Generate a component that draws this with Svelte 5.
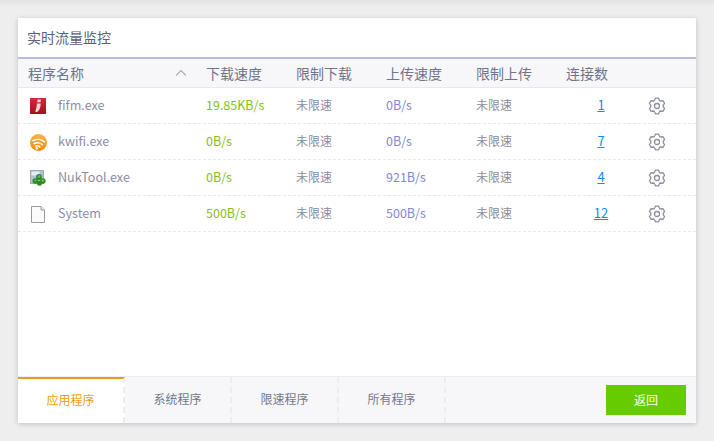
<script>
  const rows = [
    { name: 'fifm.exe', icon: 'fifm', down: '19.85KB/s', up: '0B/s', conn: 1 },
    { name: 'kwifi.exe', icon: 'wifi', down: '0B/s', up: '0B/s', conn: 7 },
    { name: 'NukTool.exe', icon: 'nuk', down: '0B/s', up: '921B/s', conn: 4 },
    { name: 'System', icon: 'file', down: '500B/s', up: '500B/s', conn: 12 }
  ];
  const tabs = ['应用程序', '系统程序', '限速程序', '所有程序'];
  const pt = (r, deg) => {
    const a = (deg * Math.PI) / 180;
    return `${(9 + r * Math.cos(a)).toFixed(2)} ${(9 + r * Math.sin(a)).toFixed(2)}`;
  };
  const gearPath =
    'M' +
    [0, 1, 2, 3, 4, 5]
      .flatMap((k) => {
        const c = -90 + 60 * k;
        return [pt(6.2, c - 24), pt(8, c - 11), pt(8, c + 11), pt(6.2, c + 24)];
      })
      .join('L') +
    'Z';
</script>

<div class="page">
  <section class="card">
    <h1 class="title">实时流量监控</h1>
    <div class="row head">
      <div class="name-h"><span>程序名称</span>
        <svg class="caret" width="12" height="8" viewBox="0 0 12 8"><path d="M1 6.500 6 1.500l5 5" fill="none" stroke="#a9acb8" stroke-width="1.100"/></svg>
      </div>
      <div>下载速度</div><div>限制下载</div><div>上传速度</div><div>限制上传</div><div>连接数</div><div></div>
    </div>
    <div class="list">
      {#each rows as r}
        <div class="row item">
          <div class="name">
            <span class="ico">
              {#if r.icon === 'fifm'}
                <svg width="16" height="16" viewBox="0 0 16 16"><defs><linearGradient id="rg" x1="0" y1="0" x2="0" y2="1"><stop offset="0" stop-color="#d52a3c"/><stop offset="1" stop-color="#a50f20"/></linearGradient></defs><rect width="16" height="16" fill="url(#rg)"/><path d="M7.500 1.500h3.400l-.4 2.800H7.300zM6.800 5.500h3.800c.3 3-.8 6.500-3.200 8.300-1.400.8-2.300 0-1.900-1.400.9-2.200 1.400-4.500 1.300-6.900z" fill="#f4d5d9"/></svg>
              {:else if r.icon === 'wifi'}
                <svg width="17" height="17" viewBox="0 0 16 16"><defs><linearGradient id="og" x1="0" y1="0" x2="0" y2="1"><stop offset="0" stop-color="#fbb444"/><stop offset="1" stop-color="#ef8a0a"/></linearGradient></defs><circle cx="8" cy="8" r="8" fill="url(#og)"/><g fill="none" stroke="#fff" stroke-width="1.400"><path d="M2.300 6.500C6.300 4.300 11 4.800 14 7.800"/><path d="M3.300 9.200C6.500 7.600 9.800 8 12.100 10.300"/><path d="M4.800 11.700c1.800-.9 3.600-.6 5 .9"/></g><circle cx="6.400" cy="13.400" r="1.100" fill="#fff"/></svg>
              {:else if r.icon === 'nuk'}
                <svg width="16" height="16" viewBox="0 0 16 16"><rect x=".5" y=".5" width="13" height="13" fill="#a9c2e2" stroke="#a8a8a8"/><rect x="1.500" y="1.500" width="8" height="4" fill="#e4ebf3"/><g fill="#2c8a20"><circle cx="9" cy="7" r="2.900"/><circle cx="5.300" cy="11" r="2.800"/><circle cx="12.800" cy="11" r="2.800"/><circle cx="9.500" cy="13.300" r="2.500"/></g><circle cx="9" cy="6.500" r="1.300" fill="#63c04a"/><circle cx="12.800" cy="10.500" r="1.300" fill="#63c04a"/><circle cx="5.300" cy="10.500" r="1" fill="#63c04a"/></svg>
              {:else}
                <svg width="16" height="17" viewBox="0 0 16 17"><path d="M1.500.5h9.500l3.500 3.500v12.500h-13z" fill="#fbfbfb" stroke="#9a9a9a"/><path d="M11 .5V4h3.500" fill="#eee" stroke="#9a9a9a"/></svg>
              {/if}
            </span>
            <span class="label">{r.name}</span>
          </div>
          <div class="down">{r.down}</div>
          <div class="lim">未限速</div>
          <div class="up">{r.up}</div>
          <div class="lim">未限速</div>
          <div class="conn"><a href="#top">{r.conn}</a></div>
          <div class="gear">
            <svg width="18" height="18" viewBox="0 0 18 18" fill="none" stroke="#8e909e" stroke-width="1.300"><path d={gearPath} stroke-linejoin="round"/><circle cx="9" cy="9" r="2.500"/></svg>
          </div>
        </div>
      {/each}
    </div>
    <footer class="foot">
      {#each tabs as t, i}
        <div class="tab" class:on={i === 0}>{t}</div>
      {/each}
      <button class="back">返回</button>
    </footer>
  </section>
</div>

<style>
  :global(body) { margin: 0; background: #eee; }
  .page {
    width: 714px; height: 441px; box-sizing: border-box; padding: 18px;
    background: linear-gradient(#e3e3e3, #eee 7px);
    font-family: "Noto Sans CJK SC", "Open Sans", sans-serif;
    overflow: hidden;
  }
  .card {
    width: 678px; height: 405px; background: #fff; display: flex; flex-direction: column;
    box-shadow: 0 1px 5px rgba(0,0,0,.2);
  }
  .title {
    margin: 0; height: 39px; line-height: 38px; padding-left: 9px;
    font-size: 14px; font-weight: 400; color: #5d6079;
    border-bottom: 2px solid #b9bcd8;
  }
  .row {
    display: grid; grid-template-columns: 188px 90px 90px 90px 90px 72px 58px;
  }
  .head {
    height: 28px; line-height: 28px; background: #f7f7fa; font-size: 14px; color: #71738a;
    border-bottom: 1px solid #e8e9ef;
  }
  .name-h { padding: 0 19px 0 10px; display: flex; justify-content: space-between; align-items: center; }
  .caret { display: block; }
  .list { flex: 1; }
  .item {
    height: 35px; line-height: 33px; font-size: 12px; color: #8b8d9c;
    border-bottom: 1px dashed #e8e9ef;
  }
  .name { display: flex; align-items: center; gap: 12px; padding-left: 12px; color: #8b8da8; font-size: 12.6px; }
  .label { margin-bottom: 2px; }
  .ico { width: 16px; height: 16px; display: block; }
  .ico svg { display: block; }
  .down { color: #86bd1f; font-size: 12.5px; }
  .up { color: #8488d2; font-size: 12.5px; }
  .conn { text-align: center; padding-right: 2px; font-size: 13px; }
  .conn a { color: #0a8cf0; }
  .gear { display: flex; align-items: center; justify-content: center; padding-right: 20px; }
  .foot {
    height: 46px; display: flex; align-items: stretch; background: #f7f7fa; border-top: 1px solid #ececf1;
    padding-right: 10px;
  }
  .tab {
    width: 105px; border-right: 2px dashed #ececf1; text-align: center;
    line-height: 44px; font-size: 12px; color: #757689;
  }
  .tab.on { background: #fff; color: #f59a16; border-top: 2px solid #f0981e; line-height: 42px; }
  .back {
    margin: 8px 0 0 auto; width: 80px; height: 30px; background: #66cc00; border: 0; color: #fff;
    font: inherit; font-size: 12px; line-height: 28px; padding: 0;
  }
</style>
